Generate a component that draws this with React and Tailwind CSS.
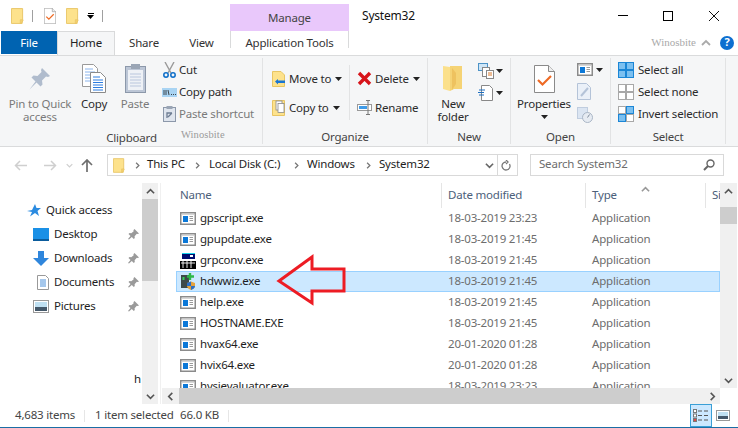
import React from "react";

const FONT = { fontFamily: '"Noto Sans", "Open Sans", sans-serif' };

const Folder = ({ w = 14, h = 17 }) => (
  <svg width={w} height={h} viewBox="0 0 14 17" className="shrink-0">
    <path d="M.5.5h12v12h-.5v4H.5z" fill="#fde28c" stroke="#e8c563" />
    <path d="M10 12.5h3v1l-2 3h-1z" fill="#f3d070" stroke="#e8c563" strokeWidth=".7" />
  </svg>
);
const Caret = ({ c = "#222" }) => (
  <svg width="7" height="4" viewBox="0 0 7 4" className="shrink-0"><path d="M0 0h7L3.500 4z" fill={c} /></svg>
);

const PropDoc = ({ w = 21, h = 28 }) => (
  <svg width={w} height={h} viewBox="0 0 21 28" className="shrink-0">
    <path d="M.5.5h14l6 6v21H.5z" fill="#fff" stroke="#8a8a8a" />
    <path d="M14.500.5v6h6" fill="#eee" stroke="#8a8a8a" />
    <path d="M4 15l4.500 4.500L17 11" fill="none" stroke="#ee6a24" strokeWidth="2.200" />
  </svg>
);
const AppIcon = () => (
  <svg width="16" height="13" viewBox="0 0 16 13" className="shrink-0">
    <rect x=".75" y=".75" width="14.500" height="11.500" fill="#fff" stroke="#8b8b8b" strokeWidth="1.500" />
    <rect x="2" y="2" width="12" height="1" fill="#d6d6d6" />
    <rect x="3" y="4" width="5" height="6" fill="#0b78d8" />
    <path d="M9.500 4.500h3.500M9.500 6.500h3.500M9.500 8.500h3.500" stroke="#9a9a9a" />
  </svg>
);
const GrpIcon = () => (
  <svg width="16" height="16" viewBox="0 0 16 16" className="shrink-0">
    <rect x="2" y="0" width="13" height="6" fill="#000c6e" />
    <rect x="2" y="0" width="13" height="1" fill="#19d3ee" />
    <rect x="10" y="2" width="3" height="2" fill="#fff" />
    <rect x="0" y="8" width="16" height="8" fill="#000" />
    <path d="M3 7v8M7 7v8M11 7v8M1 10h14" stroke="#fff" strokeWidth=".9" />
  </svg>
);
const WizIcon = () => (
  <svg width="16" height="17" viewBox="0 0 16 17" className="shrink-0">
    <rect x="1" y="2" width="8" height="13" fill="#3f4a4a" />
    <rect x="2.500" y="4" width="2" height="3" fill="#39d05c" />
    <path d="M10 0v7M7 3.500h7" stroke="#2fb84a" strokeWidth="2.400" />
    <path d="M7 10l4-1.500 4 1.500v3c0 2-2 3-4 4-2-1-4-2-4-4z" fill="#e6a23c" />
    <path d="M7 10l4-1.500V13H7z" fill="#2a6fc9" />
    <path d="M11 13h4c0 2-2 3-4 4z" fill="#2a6fc9" />
  </svg>
);
const Pin = () => (
  <svg width="11" height="11" viewBox="0 0 11 11" className="shrink-0">
    <path d="M6.500 0l4.500 4.500-1.200.6-1 -.3-2.200 2.400.2 1.800-1 1-2-2L1 10.500 0 10l2.500-3-2-2 1-1 1.800.3L5.700 2.200l-.3-1z" fill="#9a9a9a" />
  </svg>
);
const NavRow = ({ icon, label }) => (
  <div className="flex h-6 shrink-0 items-center">
    <div className="flex w-[54px] shrink-0 justify-end pr-[5px]">{icon}</div>
    <span className="w-[74px] shrink-0 text-[#1e1e1e]">{label}</span>
    <Pin />
  </div>
);
const Chev = ({ d = "r", c = "#666", s = 9 }) => (
  <svg width={s} height={s} viewBox="0 0 10 10" className="shrink-0">
    <path d={d === "r" ? "M3 1l4 4-4 4" : d === "l" ? "M7 1L3 5l4 4" : d === "u" ? "M1 7l4-4 4 4" : "M1 3l4 4 4-4"} fill="none" stroke={c} strokeWidth="1.800" />
  </svg>
);

const Group = ({ width, label, children }) => (
  <div className="flex h-[86px] shrink-0 flex-col border-r border-[#e2e3e4]" style={{ width }}>
    <div className="flex h-[72px]">{children}</div>
    <div className="text-center leading-[15px] text-[#444]">{label}</div>
  </div>
);
const Big = ({ width, icon, disabled, children }) => (
  <div className={`flex shrink-0 flex-col items-center leading-[13px] ${disabled ? "text-[#7a7a7a]" : "text-[#2b2b2b]"}`} style={{ width }}>
    <div className="flex h-[39px] w-full items-center justify-center pt-[2px]">{icon}</div>
    <div className="text-center">{children}</div>
  </div>
);
const Small = ({ icon, disabled, h = 22, iconW = 18, children }) => (
  <div className={`flex shrink-0 items-center whitespace-nowrap ${disabled ? "text-[#7a7a7a]" : "text-[#2b2b2b]"}`} style={{ height: h }}>
    <div className="flex shrink-0 items-center justify-center" style={{ width: iconW }}>{icon}</div>
    <div className="pl-[2px]">{children}</div>
  </div>
);
const SelIcon = ({ mode }) => {
  const sq = [[0, 0], [8, 0], [0, 8], [8, 8]];
  return (
    <svg width="16" height="16" viewBox="0 0 16 16" className="shrink-0">
      {sq.map(([x, y], i) => {
        const on = mode === "all" || (mode === "inv" && (i === 1 || i === 2));
        return <rect key={i} x={x + 0.5} y={y + 0.5} width="7" height="7" fill={on ? "#7cc0f0" : "#fff"} stroke={on ? "#1b86d6" : "#a8a8a8"} />;
      })}
    </svg>
  );
};

const rows = [
  ["gpscript.exe", "18-03-2019 23:23", "a"],
  ["gpupdate.exe", "18-03-2019 21:45", "a"],
  ["grpconv.exe", "18-03-2019 21:45", "g"],
  ["hdwwiz.exe", "18-03-2019 21:45", "w"],
  ["help.exe", "18-03-2019 21:45", "a"],
  ["HOSTNAME.EXE", "18-03-2019 21:45", "a"],
  ["hvax64.exe", "20-01-2020 01:28", "a"],
  ["hvix64.exe", "20-01-2020 01:28", "a"],
  ["hvsievaluator.exe", "18-03-2019 23:23", "a"],
];

export default function App() {
  return (
    <div className="relative flex h-[428px] w-[738px] flex-col overflow-hidden bg-white text-[11.5px] tracking-[-0.2px]" style={FONT}>
      {/* title bar */}
      <div className="flex h-[31px] shrink-0 items-end">
        <div className="flex h-[31px] w-[230px] shrink-0 items-center pl-[11px]">
          <Folder w={13} h={16} />
          <div className="ml-[8px] h-[12px] w-px bg-[#a0a0a0]" />
          <div className="ml-[11px]"><PropDoc w={12} h={16} /></div>
          <div className="ml-[10px]"><Folder w={13} h={16} /></div>
          <div className="ml-[8px] flex flex-col items-center gap-[1px]">
            <div className="h-px w-[6px] bg-black" />
            <Caret c="#000" />
          </div>
          <div className="ml-[8px] h-[12px] w-px bg-[#a0a0a0]" />
        </div>
        <div className="flex h-[27px] w-[119px] shrink-0 items-center justify-center bg-[#e9c8fb] text-[#444]">Manage</div>
        <div className="flex h-[31px] flex-1 items-center pl-[13px] text-[12px] text-[#111]">System32</div>
        <div className="flex h-[31px] w-[120px] shrink-0 items-center">
          <div className="ml-0 h-px w-[10px] bg-black" />
          <div className="ml-[35px] h-[10px] w-[10px] border border-black" />
          <svg width="10" height="10" viewBox="0 0 10 10" className="ml-[36px]"><path d="M0 0l10 10M10 0L0 10" stroke="#111" /></svg>
        </div>
      </div>
      {/* tab row */}
      <div className="relative z-10 flex h-[24px] shrink-0 pl-px">
        <div className="flex h-[23px] w-[56px] items-center justify-center bg-[#0063b1] text-white">File</div>
        <div className="flex h-[24px] w-[58px] items-center justify-center border-x border-t border-[#d9dadb] bg-[#f5f6f7] pb-[2px] text-[#222]">Home</div>
        <div className="flex h-[23px] w-[58px] items-center justify-center text-[#333]">Share</div>
        <div className="flex h-[23px] w-[57px] items-center justify-center text-[#333]">View</div>
        <div className="flex h-[17px] w-[119px] items-center justify-center self-start border-x border-[#d9dadb] pt-[7px] text-[#333]">Application Tools</div>
        <div className="flex h-[23px] flex-1 items-center justify-end pr-[4px]">
          <span className="mr-[5px] text-[11px] tracking-normal text-[#a9a9a9]" style={{ fontFamily: '"Liberation Serif", serif' }}>Winosbite</span>
          <Chev d="u" c="#aaa" s={10} />
          <div className="ml-[9px] flex h-[14px] w-[14px] items-center justify-center rounded-full bg-[#0d6fd0] text-[11px] font-bold text-white">?</div>
        </div>
      </div>
      {/* ribbon */}
      <div className="flex h-[92px] shrink-0 border-y border-[#dadbdc] bg-[#f5f6f7] pl-px pt-[2px]">
        <Group width={262} label="Clipboard">
          <div className="w-[4px] shrink-0" />
          <Big width={70} disabled icon={
            <svg width="22" height="24" viewBox="0 0 22 24">
              <path d="M13 1l8 8-2 1-2-.5-4 4 .5 4-2 2-4-4-7 7 6-8-4-4 2-2 4 .5 4-4-.5-2z" fill="#b0bccd" />
            </svg>
          }>Pin to Quick<br />access</Big>
          <Big width={38} icon={
            <svg width="24" height="29" viewBox="0 0 24 29">
              <path d="M.5.5h11l4 4v18H.5z" fill="#fff" stroke="#9a9a9a" />
              <path d="M3 5h8M3 8h10M3 11h10M3 14h10M3 17h10" stroke="#8ab4ec" />
              <path d="M8.500 8.500h10l5 5v15h-15z" fill="#fff" stroke="#8a8a8a" />
              <path d="M11 13h7M11 16h10M11 18.500h10M11 21h10M11 23.500h10M11 26h10" stroke="#2d7de0" />
            </svg>
          }>Copy</Big>
          <Big width={44} disabled icon={
            <svg width="21" height="29" viewBox="0 0 21 29">
              <rect x=".5" y="2.500" width="20" height="26" fill="#bcc6d6" stroke="#8c98aa" />
              <rect x="3" y="6" width="15" height="20" fill="#eef1f6" />
              <path d="M5 10h11M5 13h11M5 16h11M5 19h11M5 22h11" stroke="#b9c6dd" />
              <rect x="6" y="0" width="9" height="5" fill="#9aa5b5" />
            </svg>
          }>Paste</Big>
          <div className="flex w-[100px] shrink-0 flex-col pl-[4px] pt-[1px]">
            <Small iconW={16} icon={
              <svg width="13" height="16" viewBox="0 0 13 16">
                <path d="M2 0l6 11M11 0L5 11" stroke="#9a9a9a" strokeWidth="1.400" />
                <circle cx="3" cy="13" r="2.200" fill="none" stroke="#0c6dc8" strokeWidth="1.500" />
                <circle cx="10" cy="13" r="2.200" fill="none" stroke="#0c6dc8" strokeWidth="1.500" />
              </svg>
            }>Cut</Small>
            <Small iconW={16} icon={
              <svg width="15" height="9" viewBox="0 0 15 9">
                <rect width="15" height="9" fill="#a9d4f3" />
                <path d="M2 2v5M4 2v5M6 2l1 5M9 6.500h1M11 6.500h1M13 6.500h1" stroke="#222" strokeWidth=".8" />
              </svg>
            }>Copy path</Small>
            <Small iconW={16} disabled icon={
              <svg width="13" height="16" viewBox="0 0 13 16">
                <rect x=".5" y="1.500" width="12" height="14" fill="#dfe5ee" stroke="#8c98aa" />
                <rect x="3.500" y="0" width="6" height="3" fill="#9aa5b5" />
                <path d="M4 12V7h5M5 11l4-4" stroke="#6d7c92" strokeWidth="1.300" fill="none" />
              </svg>
            }>Paste shortcut</Small>
            <div className="pl-[20px] pt-[3px] text-[10.5px] leading-[14px] tracking-[0.1px] text-[#9a9a9a]" style={{ fontFamily: '"Liberation Serif", serif' }}>Winosbite</div>
          </div>
        </Group>
        <Group width={165} label="Organize">
          <div className="flex w-[86px] shrink-0 flex-col pl-[8px] pt-[6px]">
            <Small h={29} iconW={14} icon={
              <svg width="13" height="16" viewBox="0 0 13 16">
                <path d="M.5.500h8.500l3.500 3.500v11.500H.5z" fill="#fde28c" stroke="#e8c563" />
                <path d="M3 10.500l3-2.500v1.500h7V12H6v1.500z" fill="#1976d2" />
              </svg>
            }><span className="inline-flex items-center gap-[4px] pl-[2px]">Move to <Caret /></span></Small>
            <Small h={29} iconW={14} icon={
              <svg width="13" height="16" viewBox="0 0 13 16">
                <path d="M.5.500h12v15H.5z" fill="#fde28c" stroke="#e8c563" />
                <rect x="4" y="1" width="6" height="9" fill="#fff" stroke="#888" strokeWidth=".8" />
                <rect x="6" y="3.500" width="6" height="9" fill="#fff" stroke="#888" strokeWidth=".8" />
              </svg>
            }><span className="inline-flex items-center gap-[4px] pl-[2px]">Copy to <Caret /></span></Small>
          </div>
          <div className="mt-[7px] h-[55px] w-px shrink-0 bg-[#e2e3e4]" />
          <div className="flex flex-col pl-[6px] pt-[6px]">
            <Small h={29} iconW={17} icon={
              <svg width="15" height="15" viewBox="0 0 15 15"><path d="M2 2l11 11M13 2L2 13" stroke="#d7141a" strokeWidth="3.400" /></svg>
            }><span className="inline-flex items-center gap-[4px]">Delete <Caret /></span></Small>
            <Small h={29} iconW={17} icon={
              <svg width="16" height="15" viewBox="0 0 16 15">
                <rect x=".5" y="4.500" width="14" height="6" fill="#fff" stroke="#999" />
                <rect x="2" y="6" width="8" height="3" fill="#3f9be8" />
                <path d="M11 .5v14M9 .5h4M9 14.500h4" stroke="#777" fill="none" />
              </svg>
            }>Rename</Small>
          </div>
        </Group>
        <Group width={83} label="New">
          <Big width={50} icon={
            <svg width="20" height="27" viewBox="0 0 20 27">
              <path d="M0 1l7 1v24l-7-2z" fill="#fbe08b" />
              <path d="M7 1h12v23H11L7 26z" fill="#f5d375" />
              <path d="M9 3l4 5v11l-4 6z" fill="#eec25f" />
            </svg>
          }>New<br />folder</Big>
          <div className="flex flex-col gap-[6px] pt-[5px]">
            <div className="flex items-center gap-[2px]">
              <svg width="16" height="16" viewBox="0 0 16 16">
                <rect x=".5" y=".5" width="9" height="7" fill="#cfe6f7" stroke="#4d93c7" />
                <rect x="4.500" y="4.500" width="7" height="9" fill="#fff" stroke="#888" />
                <rect x="8.500" y="7.500" width="7" height="8" fill="#fff" stroke="#888" />
                <path d="M10 10h4M10 12h4" stroke="#d9792b" />
              </svg>
              <Caret />
            </div>
            <div className="flex items-center gap-[2px]">
              <svg width="16" height="16" viewBox="0 0 16 16">
                <path d="M3.500.5h8l3 3v12h-11z" fill="#fff" stroke="#888" />
                <path d="M1 5h6M0 7.500h6M1 10h5" stroke="#1e6fc0" />
              </svg>
              <Caret />
            </div>
          </div>
        </Group>
        <Group width={100} label="Open">
          <div className="flex w-[66px] shrink-0 flex-col items-center leading-[13px] text-[#2b2b2b]">
            <div className="flex h-[39px] items-center justify-center pt-[2px]"><PropDoc /></div>
            <div>Properties</div>
            <div className="pt-[5px]"><Caret /></div>
          </div>
          <div className="flex flex-col gap-[6px] pt-[5px]">
            <div className="flex h-[13px] items-center gap-[3px]">
              <AppIcon />
              <Caret />
            </div>
            <div className="flex h-[18px] items-center">
              <svg width="14" height="17" viewBox="0 0 14 17">
                <path d="M.5.5h9l4 4v12H.5z" fill="#eaf0f8" stroke="#b4c3d8" />
                <path d="M4 13l7-8" stroke="#b4c3d8" strokeWidth="2" />
              </svg>
            </div>
            <div className="flex h-[17px] items-center">
              <svg width="16" height="16" viewBox="0 0 16 16">
                <rect x=".5" y=".5" width="10" height="11" fill="#dbe5f2" stroke="#c0cddf" />
                <circle cx="10.500" cy="10.500" r="5" fill="#e6ebf2" stroke="#a9b5c5" />
                <path d="M10.500 10.500l2-3" stroke="#7e8a9a" />
              </svg>
            </div>
          </div>
        </Group>
        <Group width={115} label="Select">
          <div className="flex flex-col pl-[7px] pt-[1px]">
            <Small iconW={16} icon={<SelIcon mode="all" />}><span className="pl-[2px]">Select all</span></Small>
            <Small iconW={16} icon={<SelIcon mode="none" />}><span className="pl-[2px]">Select none</span></Small>
            <Small iconW={16} icon={<SelIcon mode="inv" />}><span className="pl-[2px]">Invert selection</span></Small>
          </div>
        </Group>
      </div>
      {/* address bar */}
      <div className="flex h-[36px] shrink-0 items-center">
        <div className="flex w-[107px] shrink-0 items-center pl-[14px]">
          <svg width="13" height="11" viewBox="0 0 13 11"><path d="M6 1L1.500 5.500 6 10M2 5.500h11" fill="none" stroke="#cfcfcf" strokeWidth="1.500" /></svg>
          <svg width="13" height="11" viewBox="0 0 13 11" className="ml-[17px]"><path d="M7 1l4.500 4.500L7 10M11 5.500H0" fill="none" stroke="#cfcfcf" strokeWidth="1.500" /></svg>
          <div className="ml-[9px]"><Chev d="d" c="#cfcfcf" s={7} /></div>
          <svg width="12" height="13" viewBox="0 0 12 13" className="ml-[8px]"><path d="M1 6l5-5 5 5M6 1.500V13" fill="none" stroke="#6e6e6e" strokeWidth="1.700" /></svg>
        </div>
        <div className="flex h-[22px] w-[411px] shrink-0 items-center border border-[#d9d9d9] pl-[5px] text-[#1e1e1e]">
          <Folder w={12} h={15} />
          <div className="ml-[9px]"><Chev c="#777" s={7} /></div>
          <span className="ml-[6px] w-[40px] pb-[2px]">This PC</span>
          <div className="ml-[7px]"><Chev c="#777" s={7} /></div>
          <span className="ml-[8px] w-[77px] whitespace-nowrap pb-[2px]">Local Disk (C:)</span>
          <div className="ml-[7px]"><Chev c="#777" s={7} /></div>
          <span className="ml-[7px] w-[52px] pb-[2px]">Windows</span>
          <div className="ml-[6px]"><Chev c="#777" s={7} /></div>
          <span className="ml-[7px] w-[52px] pb-[2px]">System32</span>
          <div className="ml-[54px]"><Chev d="d" c="#666" s={9} /></div>
          <div className="ml-[3px] flex h-full w-[17px] items-center justify-center border-l border-[#d9d9d9]">
            <svg width="10" height="11" viewBox="0 0 10 11"><path d="M8.500 4A4 4 0 1 1 5 2M5 0l2 2-2 2" fill="none" stroke="#777" strokeWidth="1.300" /></svg>
          </div>
        </div>
        <div className="ml-[12px] flex h-[22px] w-[194px] shrink-0 items-center justify-between border border-[#d9d9d9] pl-[8px] pr-[8px] text-[#6d6d6d]">
          <span className="pb-[2px]">Search System32</span>
          <svg width="12" height="12" viewBox="0 0 12 12"><circle cx="7.500" cy="4.500" r="3.500" fill="none" stroke="#666" strokeWidth="1.400" /><path d="M5 7l-4 4" stroke="#666" strokeWidth="2" /></svg>
        </div>
      </div>
      {/* main */}
      <div className="flex h-[221px] shrink-0">
        <div className="flex w-[142px] shrink-0 flex-col overflow-hidden pt-[15px]">
          <div className="flex h-6 shrink-0 items-center text-[#1e1e1e]">
            <div className="flex w-[46px] shrink-0 justify-end pr-[5px]">
              <svg width="14" height="13" viewBox="0 0 14 13"><path d="M8 0l1.500 4H14l-3.500 3 1.500 5-4-3-5 3.500L5 8 0 7l5-1z" fill="#2b8be0" /></svg>
            </div>
            Quick access
          </div>
          <NavRow label="Desktop" icon={
            <svg width="16" height="13" viewBox="0 0 16 13"><rect width="16" height="11" fill="#1a90e6" /><rect y="11" width="16" height="2" fill="#0b5c9c" /></svg>
          } />
          <NavRow label="Downloads" icon={
            <svg width="16" height="15" viewBox="0 0 16 15"><path d="M5 0h6v7h5l-8 8-8-8h5z" fill="#2f86dc" /></svg>
          } />
          <NavRow label="Documents" icon={
            <svg width="12" height="15" viewBox="0 0 12 15"><path d="M.5.5h8l3 3v11H.5z" fill="#fff" stroke="#999" /><path d="M3 5h6M3 7h6M3 9h6M3 11h6" stroke="#4a8fd8" /></svg>
          } />
          <NavRow label="Pictures" icon={
            <svg width="16" height="13" viewBox="0 0 16 13"><rect x=".5" y=".5" width="15" height="12" fill="#fff" stroke="#999" /><rect x="2" y="2" width="12" height="5" fill="#bfe0f2" /><rect x="2" y="7" width="12" height="4" fill="#44586a" /></svg>
          } />
          <div className="mt-[52px] flex shrink-0 justify-end pr-[1px] text-[#1e1e1e]">
            <span>h</span>
          </div>
        </div>
        {/* nav scrollbar */}
        <div className="flex w-[16px] shrink-0 flex-col bg-[#f0f0f0]">
          <div className="flex h-[16px] items-center justify-center"><Chev d="u" c="#555" s={9} /></div>
          <div className="h-[82px] bg-[#cdcdcd]" />
          <div className="flex-1" />
          <div className="flex h-[16px] items-center justify-center"><Chev d="d" c="#555" s={9} /></div>
        </div>
        <div className="ml-[2px] w-px shrink-0 bg-[#f0f0f0]" />
        <div className="w-px shrink-0" />
        {/* list */}
        <div className="flex flex-1 flex-col">
          <div className="flex h-[205px]">
            <div className="w-[558px] shrink-0 overflow-hidden">
              <div className="relative flex h-[25px] text-[#4c607a]">
                <div className="flex h-full w-[279px] items-center pb-[2px] pl-[18px]">Name</div>
                <div className="flex h-full w-[144px] items-center border-l border-[#e5e5e5] pb-[2px] pl-[6px]">Date modified</div>
                <div className="flex h-full w-[120px] items-center border-l border-[#e5e5e5] pb-[2px] pl-[6px]">Type</div>
                <div className="flex h-full w-[15px] items-center overflow-hidden border-l border-[#e5e5e5] pb-[2px] pl-[6px]">Size</div>
                <div className="absolute left-[479px] top-[2px]"><Chev d="u" c="#999" s={9} /></div>
              </div>
              <div className="h-[180px] overflow-hidden">
                {rows.map(([name, date, kind]) => {
                  const sel = kind === "w";
                  return (
                    <div key={name} className={`flex h-[21px] items-center ${sel ? "ml-[14px] border border-[#99d1ff] bg-[#cce8ff] pl-[3px]" : "pl-[18px]"}`}>
                      <div className="flex w-[20px] shrink-0 items-center">
                        {kind === "a" ? <AppIcon /> : kind === "g" ? <GrpIcon /> : <WizIcon />}
                      </div>
                      <div className="w-[248px] shrink-0 pb-[1px] text-[#1e1e1e]">{name}</div>
                      <div className="w-[144px] shrink-0 pb-[1px] text-[#6d6d6d]">{date}</div>
                      <div className="pb-[1px] text-[#6d6d6d]">Application</div>
                    </div>
                  );
                })}
              </div>
            </div>
            <div className="flex w-[17px] shrink-0 flex-col bg-[#f0f0f0]">
              <div className="flex h-[24px] items-center justify-center pb-[8px]"><Chev d="u" c="#555" s={9} /></div>
              <div className="h-[17px] bg-[#cdcdcd]" />
              <div className="flex-1" />
              <div className="flex h-[16px] items-center justify-center"><Chev d="d" c="#555" s={9} /></div>
            </div>
          </div>
          <div className="flex h-[16px] w-[558px] shrink-0 bg-[#f0f0f0]">
            <div className="flex w-[17px] items-center justify-center"><Chev d="l" c="#555" s={9} /></div>
            <div className="w-[461px] bg-[#cdcdcd]" />
            <div className="flex-1" />
            <div className="flex w-[16px] items-center justify-center"><Chev d="r" c="#555" s={9} /></div>
          </div>
        </div>
      </div>
      {/* status bar */}
      <div className="flex h-[23px] shrink-0 items-center text-[#444]">
        <span className="box-content w-[69px] shrink-0 pb-[2px] pl-[15px]">4,683 items</span>
        <div className="h-[12px] w-px bg-[#e6e6e6]" />
        <span className="ml-[10px] w-[85px] shrink-0 whitespace-nowrap pb-[2px]">1 item selected</span>
        <span className="w-[48px] shrink-0 pb-[2px]">66.0 KB</span>
        <div className="h-[12px] w-px bg-[#e6e6e6]" />
        <div className="ml-auto flex h-full items-center">
          <div className="flex h-full w-[22px] items-center justify-center border border-[#3a9fd6] bg-[#cce8ff]">
            <svg width="16" height="13" viewBox="0 0 16 13">
              <rect x=".5" y=".5" width="3" height="3" fill="#fff" stroke="#777" />
              <rect x=".5" y="5" width="3" height="3" fill="#fff" stroke="#777" />
              <rect x=".5" y="9.500" width="3" height="3" fill="#e04848" stroke="#777" />
              <path d="M5 2h4M11 2h4M5 6.500h4M11 6.500h4M5 11h4M11 11h4" stroke="#555" />
            </svg>
          </div>
          <div className="ml-[4px] mr-[8px]">
            <svg width="14" height="11" viewBox="0 0 14 11"><rect x=".5" y=".5" width="13" height="10" fill="#fff" stroke="#999" /><rect x="2" y="2" width="10" height="4" fill="#bfe0f2" /><rect x="2" y="6" width="10" height="3" fill="#44586a" /></svg>
          </div>
        </div>
      </div>
      <div className="h-[2px] shrink-0 bg-[#1a6ea5]" />
      {/* annotation arrow overlay */}
      <svg className="absolute left-0 top-0" width="738" height="428" viewBox="0 0 738 428" fill="none">
        <path d="M279 281l33-24v12h32v22h-32v12z" stroke="#ed1c24" strokeWidth="3" />
      </svg>
    </div>
  );
}
